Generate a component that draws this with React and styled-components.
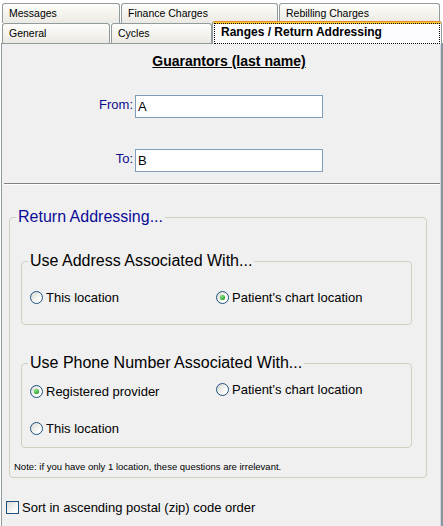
import React from 'react';
import styled, { createGlobalStyle } from 'styled-components';

const GlobalStyle = createGlobalStyle`
  html, body { margin: 0; padding: 0; background: #ffffff; }
  body { font-family: "Liberation Sans", Arial, sans-serif; }
  * { box-sizing: border-box; }
`;

const Window = styled.div`
  width: 443px;
  height: 526px;
  overflow: hidden;
  display: flex;
  flex-direction: column;
  background: #ffffff;
`;

const TabStrip = styled.div`
  position: relative;
  z-index: 1;
  display: flex;
  flex-direction: column;
  padding: 3px 0 0 2px;
`;

const TabRow = styled.div`
  display: flex;
  align-items: flex-end;
  gap: 1px;
  height: 20px;
`;

const Tab = styled.div`
  width: ${p => p.$w}px;
  height: 20px;
  flex: none;
  border: 1px solid #919b9c;
  border-bottom: none;
  border-radius: 3px 3px 0 0;
  background: linear-gradient(#fdfdfb, #f3f2ec 55%, #eae9e3);
  font-size: 10.5px;
  line-height: 19px;
  padding-left: 6px;
  color: #000;
  white-space: nowrap;
`;

const ActiveTab = styled.div`
  width: ${p => p.$w}px;
  height: 23px;
  flex: none;
  margin-left: -1px;
  margin-bottom: -1px;
  border-left: 1px solid #919b9c;
  border-right: 1px solid #919b9c;
  border-radius: 3px 3px 0 0;
  background: linear-gradient(#e68b2c 0 1px, #ffc73c 1px 3px, #fcfcfe 3px);
  padding: 2px 1px 0 1px;
`;

const FocusRect = styled.div`
  height: 100%;
  border: 1px dotted #000;
  font-size: 12px;
  font-weight: bold;
  line-height: 16px;
  padding-left: 6px;
  color: #000;
  white-space: nowrap;
`;

const Panel = styled.div`
  flex: 1;
  margin-left: 1px;
  width: 442px;
  background: #f0f0f0;
  border-top: 1px solid #919b9c;
  border-left: 1px solid #919b9c;
  border-right: 2px solid #8a95a2;
  box-shadow: inset -1px 0 0 #d3d7dc;
  display: flex;
  flex-direction: column;
`;

const Heading = styled.div`
  margin-top: 9px;
  padding-left: 15px;
  text-align: center;
  font-size: 14px;
  line-height: 16px;
  font-weight: bold;
  text-decoration: underline;
  color: #000;
`;

const FormRow = styled.div`
  display: flex;
  align-items: center;
  height: 23px;
  margin-top: ${p => p.$mt}px;
`;

const FieldLabel = styled.label`
  width: 131px;
  flex: none;
  text-align: right;
  font-size: 13px;
  line-height: 16px;
  padding-bottom: 3px;
  color: #0c0c8c;
`;

const TextInput = styled.input`
  margin: 0 0 0 2px;
  width: 188px;
  height: 23px;
  border: 1px solid #7f9db9;
  background: #ffffff;
  padding: 0 2px;
  font-family: "Liberation Sans", Arial, sans-serif;
  font-size: 13px;
  color: #000;
  outline: none;
`;

const Separator = styled.div`
  margin: 11px 1px 0 2px;
  height: 2px;
  border-top: 1px solid #808080;
  border-bottom: 1px solid #ffffff;
`;

const Group = styled.fieldset`
  min-inline-size: 0;
  margin: ${p => p.$margin};
  padding: ${p => p.$pad};
  border: 1px solid #d0d0bf;
  border-radius: 4px;
`;

const Legend = styled.legend`
  margin-left: 2px;
  padding: 0 2px;
  font-size: 16px;
  line-height: 18px;
  color: ${p => (p.$blue ? '#0b0b98' : '#000')};
`;

const OptionGrid = styled.div`
  display: grid;
  grid-template-columns: 186px auto;
  row-gap: ${p => p.$gap || 0}px;
  padding-left: 4px;
`;

const Option = styled.label`
  display: flex;
  align-items: center;
  gap: 3px;
  height: 16px;
  font-size: 13px;
  color: #000;
  white-space: nowrap;
  margin-top: ${p => p.$shift || 0}px;
`;

const RadioCircle = styled.span`
  flex: none;
  width: 13px;
  height: 13px;
  border-radius: 50%;
  border: 1px solid #1c5180;
  background: linear-gradient(135deg, #d8d8d0, #ffffff 75%);
  display: inline-flex;
  align-items: center;
  justify-content: center;
  &::after {
    content: '';
    display: ${p => (p.$checked ? 'block' : 'none')};
    width: 5px;
    height: 5px;
    border-radius: 50%;
    background: radial-gradient(circle at 40% 35%, #8fe88f, #21a121 70%);
  }
`;

const Note = styled.div`
  margin-top: 13px;
  font-size: 9.5px;
  line-height: 11px;
  color: #000;
  white-space: nowrap;
`;

const CheckRow = styled.label`
  display: flex;
  align-items: center;
  gap: 3px;
  height: 16px;
  margin-top: 21px;
  padding-left: 4px;
  font-size: 13px;
  color: #000;
`;

const CheckBox = styled.span`
  flex: none;
  width: 13px;
  height: 13px;
  border: 1px solid #1c5180;
  background: linear-gradient(135deg, #dcdcd5, #ffffff 80%);
`;

function Radio({ checked, children, shift }) {
  return (
    <Option $shift={shift}>
      <RadioCircle $checked={checked} />
      {children}
    </Option>
  );
}

export default function App() {
  return (
    <Window>
      <GlobalStyle />
      <TabStrip>
        <TabRow>
          <Tab $w={118}>Messages</Tab>
          <Tab $w={157}>Finance Charges</Tab>
          <Tab $w={161}>Rebilling Charges</Tab>
        </TabRow>
        <TabRow>
          <Tab $w={108}>General</Tab>
          <Tab $w={101}>Cycles</Tab>
          <ActiveTab $w={230}>
            <FocusRect>Ranges / Return Addressing</FocusRect>
          </ActiveTab>
        </TabRow>
      </TabStrip>
      <Panel>
        <Heading>Guarantors (last name)</Heading>
        <FormRow $mt={26}>
          <FieldLabel>From:</FieldLabel>
          <TextInput readOnly value="A" />
        </FormRow>
        <FormRow $mt={31}>
          <FieldLabel>To:</FieldLabel>
          <TextInput readOnly value="B" />
        </FormRow>
        <Separator />
        <Group $margin="23px 14px 0 7px" $pad="26px 0 5px 4px">
          <Legend $blue>Return Addressing...</Legend>
          <Group $margin="0 14px 0 7px" $pad="19px 0 19px 4px">
            <Legend>Use Address Associated With...</Legend>
            <OptionGrid>
              <Radio>This location</Radio>
              <Radio checked>Patient's chart location</Radio>
            </OptionGrid>
          </Group>
          <Group $margin="29px 14px 0 7px" $pad="11px 0 11px 4px">
            <Legend>Use Phone Number Associated With...</Legend>
            <OptionGrid $gap={21}>
              <Radio checked>Registered provider</Radio>
              <Radio shift={-2}>Patient's chart location</Radio>
              <Radio>This location</Radio>
            </OptionGrid>
          </Group>
          <Note>Note: if you have only 1 location, these questions are irrelevant.</Note>
        </Group>
        <CheckRow>
          <CheckBox />
          Sort in ascending postal (zip) code order
        </CheckRow>
      </Panel>
    </Window>
  );
}
